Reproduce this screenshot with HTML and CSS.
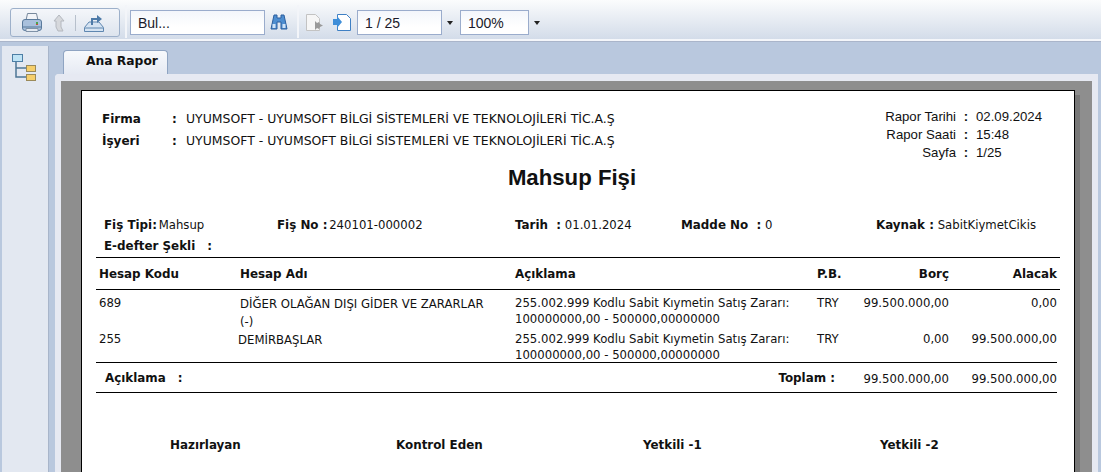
FILE: index.html
```html
<!DOCTYPE html>
<html lang="en">
<head>
    <meta charset="UTF-8">
    <title>Mahsup Fişi</title>
    <link rel="stylesheet" href="styles.css">
</head>
<body>
    <div class="toolbar">
        <div class="btn-group">
            <svg class="icon" width="22" height="22" viewBox="0 0 22 22">
                <path d="M6.500 1.500h9l1.500 7H5z" fill="#f2f4f8" stroke="#77889c"/>
                <path d="M1.500 10q0-2.500 2.500-2.500h14q2.500 0 2.500 2.500v6q0 2.500-2.500 2.500H4q-2.500 0-2.500-2.500z" fill="#a9c0dc" stroke="#5a7a9c"/>
                <path d="M2 14h18v2H2z" fill="#7f9cbb"/>
                <path d="M5 16.500h12v3H5z" fill="#e4eaf2" stroke="#7f92a8"/>
                <rect x="15" y="10" width="2" height="2" fill="#4aa34a"/>
                <rect x="15" y="12" width="2" height="1" fill="#c94a3b"/>
            </svg>
            <svg class="icon" width="16" height="20" viewBox="0 0 16 20">
                <path d="M8 2l5 6h-3v6l2 4H7l-2-4V8H3z" fill="#d6d8dc" stroke="#b4b8bf"/>
            </svg>
            <span class="btn-sep"></span>
            <svg class="icon" width="22" height="22" viewBox="0 0 22 22">
                <path d="M1.500 15.500L6 10h10l4.500 5.500v4h-19z" fill="#d5e3f2" stroke="#5f87b0"/>
                <path d="M2 16h18" stroke="#5f87b0"/>
                <path d="M9 13V7h6" fill="none" stroke="#4d7aa8" stroke-width="2"/>
                <path d="M14 3l5 4-5 4z" fill="#4d7aa8"/>
            </svg>
        </div>
        <span class="tool-sep"></span>
        <div class="field find-field">Bul...</div>
        <svg class="icon binoculars" width="18" height="17" viewBox="0 0 18 17">
            <path d="M4 1h3v3h4V1h3l3 14h-6V8H7v7H1z" fill="#4e8ed0" stroke="#2c5f9e"/>
            <rect x="2.500" y="10" width="3" height="4" fill="#cfe2f6"/>
            <rect x="12.500" y="10" width="3" height="4" fill="#cfe2f6"/>
        </svg>
        <span class="tool-sep second"></span>
        <svg class="icon prev-page" width="19" height="19" viewBox="0 0 19 19">
            <path d="M1.500 1.500h9l4 4v12h-13z" fill="#f6f6f6" stroke="#c3c3c3"/>
            <path d="M10 8l2 2 2-1 1 2 3 1.500-3 1.500-1 2-2-1-2 2z" fill="#9a9a9a"/>
        </svg>
        <svg class="icon next-page" width="20" height="19" viewBox="0 0 20 19">
            <path d="M5.500 1.500h9l4 4v12h-13z" fill="#fff" stroke="#3f80c4"/>
            <path d="M1 6h4V3l5 6-5 6v-3H1z" fill="#3f8ed8"/>
        </svg>
        <div class="field page-field">1 / 25</div>
        <span class="caret"></span>
        <div class="field zoom-field">100%</div>
        <span class="caret"></span>
    </div>

    <div class="workspace">
        <aside class="sidebar">
            <svg width="26" height="28" viewBox="0 0 26 28">
                <path d="M5 9v15h10M5 15h10" fill="none" stroke="#4d7595" stroke-width="1.500"/>
                <rect x="1.500" y="1.500" width="10" height="7" fill="#bfe3f5" stroke="#4d7ea5"/>
                <rect x="15.500" y="12.500" width="9" height="6" fill="#f6cf6c" stroke="#9b8a5a"/>
                <rect x="15.500" y="21.500" width="9" height="6" fill="#f6cf6c" stroke="#9b8a5a"/>
            </svg>
        </aside>

        <div class="viewer">
            <div class="tab">Ana Rapor</div>
            <div class="panel">
                <div class="paper">
                    <div class="head">
                        <div class="firm">
                            <div class="firm-row"><b>Firma</b><b class="firm-colon">:</b><span>UYUMSOFT - UYUMSOFT BİLGİ SİSTEMLERİ VE TEKNOLOJİLERİ TİC.A.Ş</span></div>
                            <div class="firm-row"><b>İşyeri</b><b class="firm-colon">:</b><span>UYUMSOFT - UYUMSOFT BİLGİ SİSTEMLERİ VE TEKNOLOJİLERİ TİC.A.Ş</span></div>
                        </div>
                        <div class="report-info">
                            <span class="info-label">Rapor Tarihi</span><b>:</b><span>02.09.2024</span>
                            <span class="info-label">Rapor Saati</span><b>:</b><span>15:48</span>
                            <span class="info-label">Sayfa</span><b>:</b><span>1/25</span>
                        </div>
                    </div>

                    <h1>Mahsup Fişi</h1>

                    <div class="meta">
                        <div><b>Fiş Tipi:</b> <span class="pull-val">Mahsup</span></div>
                        <div><b>Fiş No :</b> <span class="pull-val">240101-000002</span></div>
                        <div><b>Tarih &nbsp;:</b> 01.01.2024</div>
                        <div><b>Madde No &nbsp;:</b> 0</div>
                        <div><b>Kaynak :</b> SabitKiymetCikis</div>
                    </div>
                    <div class="ledger-type"><b>E-defter Şekli</b><b class="light-colon">:</b></div>

                    <div class="grid-row grid-head">
                        <div>Hesap Kodu</div>
                        <div>Hesap Adı</div>
                        <div>Açıklama</div>
                        <div>P.B.</div>
                        <div class="num">Borç</div>
                        <div class="num">Alacak</div>
                    </div>
                    <div class="grid-row line">
                        <div>689</div>
                        <div class="acct-name">DİĞER OLAĞAN DIŞI GİDER VE ZARARLAR (-)</div>
                        <div>255.002.999 Kodlu Sabit Kıymetin Satış Zararı: 100000000,00 - 500000,00000000</div>
                        <div>TRY</div>
                        <div class="num">99.500.000,00</div>
                        <div class="num">0,00</div>
                    </div>
                    <div class="grid-row line">
                        <div>255</div>
                        <div class="acct-name second-name">DEMİRBAŞLAR</div>
                        <div>255.002.999 Kodlu Sabit Kıymetin Satış Zararı: 100000000,00 - 500000,00000000</div>
                        <div>TRY</div>
                        <div class="num">0,00</div>
                        <div class="num">99.500.000,00</div>
                    </div>

                    <div class="totals">
                        <b class="note">Açıklama</b><b class="light-colon">:</b>
                        <b class="total-label">Toplam :</b>
                        <span class="total-val">99.500.000,00</span>
                        <span class="total-val">99.500.000,00</span>
                    </div>

                    <div class="signers">
                        <b>Hazırlayan</b>
                        <b>Kontrol Eden</b>
                        <b>Yetkili -1</b>
                        <b>Yetkili -2</b>
                    </div>
                </div>
            </div>
        </div>
    </div>
</body>
</html>
```

FILE: styles.css
```css
html, body {
    margin: 0;
    height: 472px;
    overflow: hidden;
}

body {
    background-color: #b9c8de;
    font-family: "DejaVu Sans", sans-serif;
    font-size: 11.700px;
    color: #111;
    display: flex;
    flex-direction: column;
}

b, .grid-head {
    font-size: 11.900px;
}

/* Toolbar */
.toolbar {
    height: 41px;
    box-sizing: border-box;
    padding: 8px 0 0 10px;
    display: flex;
    align-items: flex-start;
    background: linear-gradient(#fbfcfd, #d3dce9);
    border-bottom: 2px solid #f4f6fa;
    box-shadow: 0 1px 0 #aab5ca;
    font-family: "Liberation Sans", sans-serif;
    font-size: 14px;
    flex-shrink: 0;
}

.btn-group {
    width: 110px;
    height: 29px;
    box-sizing: border-box;
    border: 1px solid #9db0ca;
    border-radius: 3px;
    background: linear-gradient(#f4f6fa, #dde4ee);
    display: flex;
    align-items: center;
    padding-left: 10px;
    gap: 8px;
}

.btn-sep {
    width: 1px;
    height: 16px;
    background-color: #b7c0cc;
    margin-right: -1px;
}

.tool-sep {
    width: 2px;
    height: 33px;
    margin: -3px 4px 0 5px;
    background-color: #f3f5f9;
}

.tool-sep.second {
    margin-left: 9px;
    margin-right: 6px;
}

.field {
    height: 25px;
    box-sizing: border-box;
    border: 1px solid #9aaccc;
    background: linear-gradient(#f3f6fb, #fff 70%);
    padding: 4px 0 0 7px;
    line-height: 16px;
    color: #1a1a2a;
    margin-top: 2px;
}

.find-field {
    width: 135px;
    margin-left: -1px;
}

.page-field {
    width: 85px;
}

.zoom-field {
    width: 69px;
}

.icon {
    display: block;
    flex-shrink: 0;
}

.binoculars {
    margin: 6px 0 0 5px;
}

.prev-page {
    margin: 5px 0 0 0;
}

.next-page {
    margin: 5px 5px 0 8px;
}

.caret {
    width: 0;
    height: 0;
    margin: 13px 7px 0 5px;
    border-left: 3.500px solid transparent;
    border-right: 3.500px solid transparent;
    border-top: 4px solid #222;
}

/* Main area */
.workspace {
    flex: 1;
    display: flex;
    margin-top: 3px;
    min-height: 0;
}

.sidebar {
    width: 47px;
    margin: 2px 0 0 2px;
    box-sizing: border-box;
    background-color: #e3e8f1;
    border-right: 1px solid #a8b5ca;
    padding: 7px 0 0 9px;
}

.viewer {
    flex: 1;
    margin: 6px 0 0 6px;
    min-width: 0;
}

.tab {
    width: 105px;
    height: 24px;
    margin-left: 8px;
    box-sizing: border-box;
    background: linear-gradient(#f7f9fc, #e6eaf3);
    border: 1px solid #8fa4c2;
    border-bottom: none;
    border-radius: 4px 4px 0 0;
    padding: 2px 0 0 22px;
    font-weight: bold;
    font-size: 12.300px;
    line-height: 16px;
}

.panel {
    width: 1043px;
    height: 400px;
    box-sizing: border-box;
    background-color: #8e8e8e;
    border-style: solid;
    border-color: #e6e9f2;
    border-width: 7px 6px 0 6px;
    border-radius: 4px 0 0 0;
    padding: 9px 0 0 20px;
}

.paper {
    width: 994px;
    height: 400px;
    box-sizing: border-box;
    background-color: #fff;
    border: 1px solid #000;
    box-shadow: 5px 5px 0 #777;
    padding: 18px 0 0 14px;
}

/* Report header */
.head {
    display: flex;
    height: 56px;
}

.firm {
    width: 768px;
    padding: 0 0 0 6px;
}

.firm-row {
    display: flex;
    height: 22px;
    line-height: 20px;
    font-size: 12.450px;
    white-space: nowrap;
}

.firm-row b:first-child {
    width: 70px;
    font-size: 12px;
}

.firm-colon {
    width: 14px;
    font-size: 12px;
}

.report-info {
    display: grid;
    grid-template-columns: 86px 20px auto;
    grid-auto-rows: 18px;
    column-gap: 0;
    font-family: "Liberation Sans", sans-serif;
    font-size: 13.200px;
    line-height: 16px;
    white-space: nowrap;
}

.report-info b {
    text-align: center;
    font-size: 13.200px;
}

.info-label {
    text-align: right;
}

h1 {
    margin: 0;
    height: 45px;
    text-align: center;
    font-family: "Liberation Sans", sans-serif;
    font-size: 22.200px;
    line-height: 26px;
    padding: 0 26px 0 0;
    box-sizing: border-box;
}

/* Voucher fields */
.meta {
    display: grid;
    grid-template-columns: 173px 238px 166px 195px auto;
    padding: 7px 0 0 8px;
    line-height: 16px;
    white-space: nowrap;
}

.pull-val {
    margin-left: -2px;
}

.ledger-type {
    padding: 5px 0 0 8px;
    line-height: 16px;
    height: 19px;
}

.light-colon {
    margin-left: 12px;
}

/* Lines */
.grid-row {
    display: grid;
    grid-template-columns: 141px 275px 302px 30px 102px 108px;
    width: 964px;
    padding-left: 3px;
    box-sizing: border-box;
}

.grid-head {
    border-top: 1px solid #000;
    border-bottom: 1px solid #000;
    height: 33px;
    padding-top: 8px;
    font-weight: bold;
    line-height: 16px;
}

.line {
    line-height: 16px;
    padding-top: 5px;
    height: 36px;
}

.acct-name {
    line-height: 18px;
    padding-right: 22px;
}

.second-name {
    margin-left: -2px;
}

.num {
    text-align: right;
}

.totals {
    width: 961px;
    height: 31px;
    box-sizing: border-box;
    border-top: 1px solid #000;
    border-bottom: 1px solid #000;
    display: flex;
    align-items: center;
    padding-left: 9px;
}

.total-label {
    margin-left: auto;
    margin-right: 6px;
}

.total-val {
    width: 108px;
    text-align: right;
    padding-top: 2px;
}

/* Signatures */
.signers {
    display: grid;
    grid-template-columns: 226px 247px 237px auto;
    padding: 44px 0 0 74px;
    line-height: 16px;
}
```
